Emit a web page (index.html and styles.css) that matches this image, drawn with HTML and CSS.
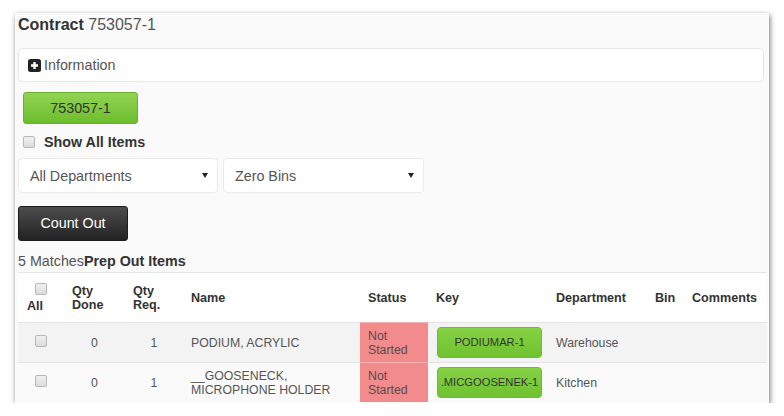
FILE: index.html
```html
<!DOCTYPE html>
<html>
<head>
<meta charset="utf-8">
<link rel="stylesheet" href="styles.css">
</head>
<body>
<div class="frame">
  <div class="content">
    <h1 class="title"><b>Contract</b> <span class="num">753057-1</span></h1>
    <div class="info">
      <svg class="info-icon" width="13" height="13" viewBox="0 0 13 13"><rect x="0" y="0" width="13" height="13" rx="2.5" fill="#222"/><path d="M6.5 3v7M3 6.5h7" stroke="#fff" stroke-width="2.4"/></svg><span>Information</span>
    </div>
    <div class="btn-green">753057-1</div>
    <div class="show-all"><span class="cb"></span><b>Show All Items</b></div>
    <div class="selects">
      <div class="select s1"><span>All Departments</span><i class="caret"></i></div>
      <div class="select s2"><span>Zero Bins</span><i class="caret"></i></div>
    </div>
    <div class="btn-dark">Count Out</div>
    <div class="matches">5 Matches<b>Prep Out Items</b></div>
    <table class="items">
      <colgroup>
        <col style="width:46px"><col style="width:61px"><col style="width:58px"><col style="width:177px"><col style="width:68px"><col style="width:120px"><col style="width:99px"><col style="width:37px"><col style="width:83px">
      </colgroup>
      <thead>
        <tr>
          <th class="c-all"><span class="cb cb-head"></span>All</th>
          <th>Qty<br>Done</th>
          <th>Qty<br>Req.</th>
          <th>Name</th>
          <th>Status</th>
          <th>Key</th>
          <th>Department</th>
          <th>Bin</th>
          <th>Comments</th>
        </tr>
      </thead>
      <tbody>
        <tr class="odd">
          <td class="center"><span class="cb"></span></td>
          <td class="center">0</td>
          <td class="center">1</td>
          <td>PODIUM, ACRYLIC</td>
          <td class="status">Not<br>Started</td>
          <td class="key"><div class="btn-key">PODIUMAR-1</div></td>
          <td>Warehouse</td>
          <td></td>
          <td></td>
        </tr>
        <tr>
          <td class="center"><span class="cb"></span></td>
          <td class="center">0</td>
          <td class="center">1</td>
          <td>__GOOSENECK,<br>MICROPHONE HOLDER</td>
          <td class="status">Not<br>Started</td>
          <td class="key"><div class="btn-key">.MICGOOSENEK-1</div></td>
          <td>Kitchen</td>
          <td></td>
          <td></td>
        </tr>
      </tbody>
    </table>
  </div>
</div>
</body>
</html>
```

FILE: styles.css
```css
html, body {
  margin: 0;
  padding: 0;
  background: #ffffff;
}
body {
  padding: 13px 0 0 15px;
  font-family: "Liberation Sans", Arial, sans-serif;
  font-size: 14.3px;
  color: #555;
}
.frame {
  width: 754px;
  height: 390px;
  background: #fafafa;
  overflow: hidden;
  box-shadow: 1px 2px 5px rgba(0, 0, 0, 0.55);
}
.content {
  padding: 2px 2px 0 3px;
}
.title {
  margin: 0;
  font-size: 16px;
  line-height: 20px;
  font-weight: normal;
  color: #555;
}
.title b {
  color: #333;
}
.info {
  margin-top: 13px;
  margin-right: 3px;
  height: 20px;
  padding: 6px 9px;
  line-height: 20px;
  background: #fff;
  border: 1px solid #e8e8e8;
  border-radius: 4px;
  display: flex;
  align-items: center;
  color: #555;
}
.info-icon {
  margin-right: 3px;
  flex: none;
}
.btn-green {
  margin: 10px 0 0 5px;
  width: 113px;
  height: 30px;
  line-height: 30px;
  text-align: center;
  color: #333;
  background: linear-gradient(#92d454, #6cbd2c);
  border: 1px solid #6aaf30;
  border-radius: 3px;
}
.show-all {
  margin-top: 6px;
  height: 24px;
  line-height: 24px;
  display: flex;
  align-items: center;
  color: #333;
}
.cb {
  display: inline-block;
  width: 10px;
  height: 10px;
  border: 1px solid #b8b8b8;
  border-radius: 2px;
  background: linear-gradient(#f0f0f0, #dcdcdc);
  flex: none;
}
.show-all .cb {
  margin: 0 9px 0 5px;
}
.selects {
  margin-top: 4px;
  display: flex;
  gap: 5px;
}
.select {
  box-sizing: border-box;
  height: 35px;
  border: 1px solid #ebebeb;
  border-radius: 4px;
  background: #fff;
  display: flex;
  align-items: center;
  justify-content: space-between;
  padding: 0 9px 0 11px;
  color: #555;
}
.s1 { width: 200px; }
.s2 { width: 201px; }
.caret {
  width: 0;
  height: 0;
  border-left: 3px solid transparent;
  border-right: 3px solid transparent;
  border-top: 5px solid #222;
}
.btn-dark {
  margin-top: 13px;
  width: 108px;
  height: 33px;
  line-height: 33px;
  text-align: center;
  color: #fff;
  background: linear-gradient(#4d4d4d, #222);
  border: 1px solid #1c1c1c;
  border-radius: 3px;
}
.matches {
  margin-top: 10px;
  line-height: 20px;
  color: #555;
}
.matches b {
  color: #333;
}
.items {
  margin-top: 1px;
  width: 749px;
  table-layout: fixed;
  border-collapse: collapse;
  font-size: 12.3px;
  color: #555;
}
.items th {
  height: 49px;
  padding: 0 8px;
  text-align: left;
  vertical-align: middle;
  font-size: 12.6px;
  line-height: 14px;
  color: #333;
  background: #fff;
  border-top: 1px solid #e6e6e6;
}
.items th.c-all {
  padding-left: 9px;
}
.cb-head {
  display: block;
  margin: 0 0 4px 8px;
}
.items td {
  height: 39px;
  padding: 0 8px;
  vertical-align: middle;
  line-height: 14px;
  border-top: 1px solid #e4e4e4;
}
.items tr.odd td {
  background: #f3f3f3;
}
.items td.center {
  text-align: center;
}
.items td.status {
  background: #f28b8b !important;
  color: #5e4a4a;
  border-top-color: #f6b2b2;
}
.items td.key {
  padding: 0 0 0 9px;
}
.btn-key {
  width: 103px;
  height: 29px;
  line-height: 29px;
  text-align: center;
  font-size: 11.2px;
  color: #333;
  white-space: nowrap;
  background: linear-gradient(#85d244, #6fc230);
  border: 1px solid #72b93a;
  border-radius: 4px;
}
```
